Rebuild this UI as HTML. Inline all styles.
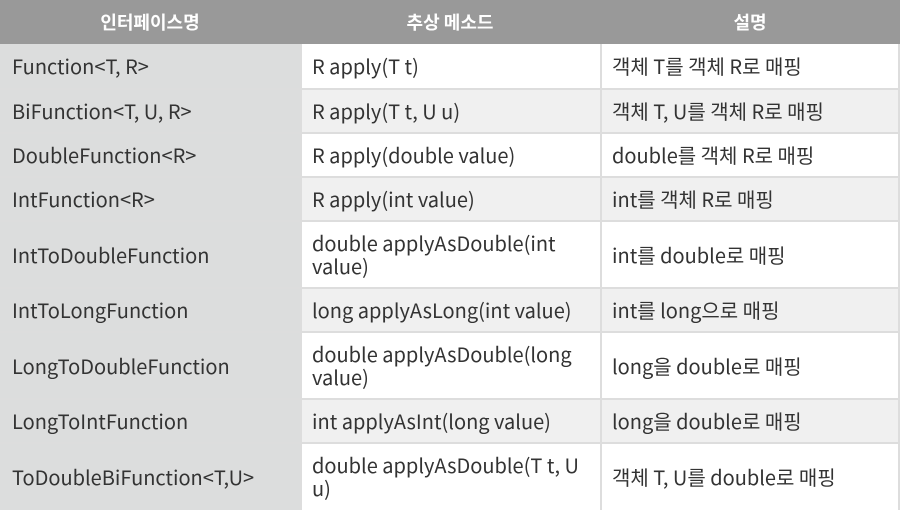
<!DOCTYPE html>
<html><head><meta charset="utf-8"><style>
*{margin:0;padding:0;box-sizing:border-box}
body{width:900px;height:505px;overflow:hidden;background:#fff;font-family:"Noto Sans CJK KR","Liberation Sans",sans-serif;color:#333;font-size:20px}
.r{position:absolute;left:0;width:900px;display:flex}
.c{display:flex;align-items:center;padding-left:12px;line-height:23px;padding-bottom:2px}
.c1{width:300px;background:#dcdddd}
.c2{width:300px;border-left:2px solid #ddd;padding-left:10px}
.c3{width:300px;border-left:2px solid #ddd;border-right:2px solid #ddd;padding-left:10px}
.h{top:0;height:44px;background:#999;color:#fff;font-weight:bold;font-size:18px}
.h .c{justify-content:center;padding:0;background:none;border:none;width:300px}
.b{border-top:2px solid #ddd}
.g .c2,.g .c3{background:#f0f0f0}
</style></head><body>
<div class="r h"><div class="c">인터페이스명</div><div class="c">추상 메소드</div><div class="c">설명</div></div>
<div class="r" style="top:44px;height:45px"><div class="c c1">Function&lt;T, R&gt;</div><div class="c c2">R apply(T t)</div><div class="c c3">객체 T를 객체 R로 매핑</div></div>
<div class="r g b" style="top:88px;height:45px"><div class="c c1">BiFunction&lt;T, U, R&gt;</div><div class="c c2">R apply(T t, U u)</div><div class="c c3">객체 T, U를 객체 R로 매핑</div></div>
<div class="r b" style="top:132px;height:45px"><div class="c c1">DoubleFunction&lt;R&gt;</div><div class="c c2">R apply(double value)</div><div class="c c3">double를 객체 R로 매핑</div></div>
<div class="r g b" style="top:176px;height:45px"><div class="c c1">IntFunction&lt;R&gt;</div><div class="c c2">R apply(int value)</div><div class="c c3">int를 객체 R로 매핑</div></div>
<div class="r b" style="top:220px;height:68px"><div class="c c1">IntToDoubleFunction</div><div class="c c2">double applyAsDouble(int<br>value)</div><div class="c c3">int를 double로 매핑</div></div>
<div class="r g b" style="top:287px;height:45px"><div class="c c1">IntToLongFunction</div><div class="c c2">long applyAsLong(int value)</div><div class="c c3">int를 long으로 매핑</div></div>
<div class="r b" style="top:331px;height:68px"><div class="c c1">LongToDoubleFunction</div><div class="c c2">double applyAsDouble(long<br>value)</div><div class="c c3">long을 double로 매핑</div></div>
<div class="r g b" style="top:398px;height:45px"><div class="c c1">LongToIntFunction</div><div class="c c2">int applyAsInt(long value)</div><div class="c c3">long을 double로 매핑</div></div>
<div class="r b" style="top:442px;height:68px"><div class="c c1" style="height:66px">ToDoubleBiFunction&lt;T,U&gt;</div><div class="c c2" style="height:66px">double applyAsDouble(T t, U<br>u)</div><div class="c c3" style="height:66px">객체 T, U를 double로 매핑</div></div>
</body></html>
